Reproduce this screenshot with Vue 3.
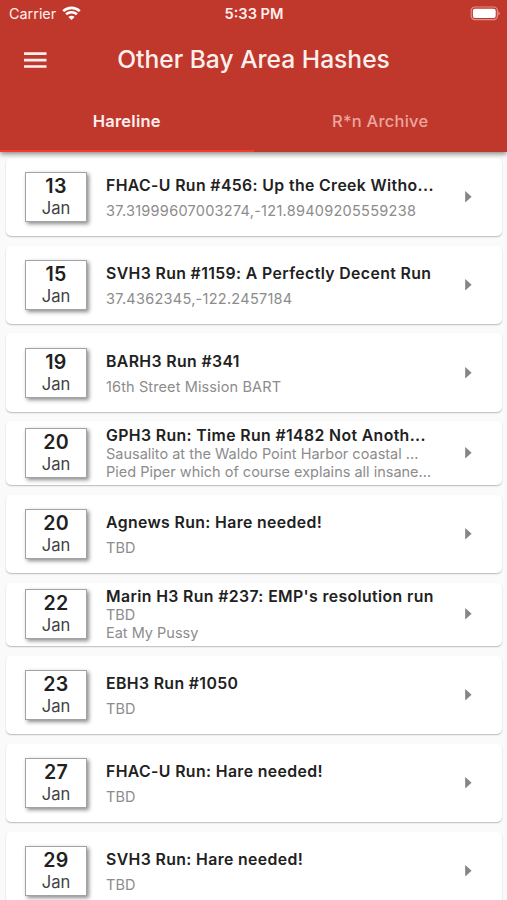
<script setup>
const runs = [
  { day: 13, title: 'FHAC-U Run #456: Up the Creek Witho...', lines: ['37.31999607003274,-121.89409205559238'], coords: true },
  { day: 15, title: 'SVH3 Run #1159: A Perfectly Decent Run', lines: ['37.4362345,-122.2457184'], coords: true },
  { day: 19, title: 'BARH3 Run #341', lines: ['16th Street Mission BART'] },
  { day: 20, title: 'GPH3 Run: Time Run #1482 Not Anoth...', lines: ['Sausalito at the Waldo Point Harbor coastal ...', 'Pied Piper which of course explains all insane...'] },
  { day: 20, title: 'Agnews Run: Hare needed!', lines: ['TBD'] },
  { day: 22, title: "Marin H3 Run #237: EMP's resolution run", lines: ['TBD', 'Eat My Pussy'] },
  { day: 23, title: 'EBH3 Run #1050', lines: ['TBD'] },
  { day: 27, title: 'FHAC-U Run: Hare needed!', lines: ['TBD'] },
  { day: 29, title: 'SVH3 Run: Hare needed!', lines: ['TBD'] },
]
</script>

<template>
  <div class="screen">
    <header class="header">
      <div class="status">
        <div class="carrier">
          <span>Carrier</span>
          <svg class="wifi" width="19" height="15" viewBox="0 0 19 15">
            <path d="M1.2 5.1C6 .8 13 .8 17.8 5.1" />
            <path d="M4.1 8.3c3-2.8 7.8-2.8 10.8 0" />
            <path class="dot" d="M6.4 10.9c1.8-1.6 4.4-1.6 6.2 0L9.5 14z" />
          </svg>
        </div>
        <span class="clock">5:33 PM</span>
        <svg class="battery" width="31" height="15" viewBox="0 0 31 15">
          <rect class="shell" x="1.2" y="1" width="26.2" height="12.6" rx="3.6" />
          <rect class="charge" x="2.9" y="2.7" width="22.8" height="9.2" rx="2" />
          <path class="cap" d="M28.4 5.2c1.8.8 1.8 3.6 0 4.4z" />
        </svg>
      </div>
      <div class="toolbar">
        <svg class="menu" width="23" height="16" viewBox="0 0 23 16">
          <path d="M0 1.6h22.5M0 8.1h22.5M0 14.5h22.5" />
        </svg>
        <h1 class="heading">Other Bay Area Hashes</h1>
      </div>
      <nav class="tabs">
        <div class="tab active"><span>Hareline</span></div>
        <div class="tab"><span>R*n Archive</span></div>
      </nav>
    </header>
    <main class="list">
      <article
        v-for="(run, i) in runs"
        :key="i"
        class="card"
        :class="{ dense: run.lines.length > 1, coords: run.coords }"
      >
        <div class="date">
          <span class="day">{{ run.day }}</span>
          <span class="month">Jan</span>
        </div>
        <div class="info">
          <div class="title">{{ run.title }}</div>
          <div v-for="line in run.lines" :key="line" class="line">{{ line }}</div>
        </div>
        <svg class="arrow" width="7" height="12" viewBox="0 0 7 12"><path d="M.2 0 6.6 5.7 .2 11.4z" /></svg>
      </article>
    </main>
  </div>
</template>

<style>
body {
  background: #fafafa;
  overflow: hidden;
}
</style>

<style scoped>
.screen {
  width: 507px;
  height: 900px;
  overflow: hidden;
  display: flex;
  flex-direction: column;
  background: #fafafa;
  font-family: Inter, 'Liberation Sans', sans-serif;
  color: #212121;
}
.header {
  flex: none;
  height: 152.4px;
  display: flex;
  flex-direction: column;
  background: #c0372c;
  color: #fff0ee;
  box-shadow: 0 2px 5px rgba(0, 0, 0, 0.46);
  z-index: 1;
}
.status {
  height: 27px;
  display: grid;
  grid-template-columns: 1fr auto 1fr;
  align-items: center;
  padding: 0 6px 0 9px;
  font-size: 14.4px;
}
.carrier {
  display: flex;
  align-items: center;
  gap: 6px;
}
.wifi {
  margin-top: -1px;
  fill: none;
  stroke: #fff;
  stroke-width: 2.6;
}
.wifi .dot {
  fill: #fff;
  stroke: none;
}
.clock {
  margin-right: 2px;
  font-weight: 600;
  font-size: 14.6px;
}
.battery {
  justify-self: end;
  margin-top: -1px;
}
.shell {
  fill: none;
  stroke: #e08f88;
  stroke-width: 1.2;
}
.charge {
  fill: #fff;
}
.cap {
  fill: #e08f88;
}
.toolbar {
  height: 65px;
  display: grid;
  grid-template-columns: 93px 1fr 93px;
  align-items: center;
}
.menu {
  margin-left: 24px;
  stroke: #fff0ee;
  stroke-width: 2.6;
}
.heading {
  margin: 0;
  padding-bottom: 1px;
  text-align: center;
  font-size: 24.6px;
  font-weight: 500;
  white-space: nowrap;
}
.tabs {
  flex: 1;
  display: flex;
}
.tab {
  flex: 1;
  display: flex;
  align-items: center;
  justify-content: center;
  border-bottom: 2px solid transparent;
  font-size: 16.5px;
  font-weight: 500;
  letter-spacing: 0.22px;
  color: #eba69e;
}
.tab span {
  padding-bottom: 1px;
}
.tab.active {
  color: #fff0ee;
  font-weight: 600;
  border-color: #f23a2f;
}
.list {
  display: flex;
  flex-direction: column;
  gap: 9.8px;
  padding: 5.3px 5px 0 6px;
}
.card {
  flex: none;
  height: 78.1px;
  display: flex;
  align-items: center;
  padding: 0 30px 0 19px;
  box-sizing: border-box;
  border-radius: 5px;
  background: #fff;
  box-shadow: 0 1px 1.5px rgba(0, 0, 0, 0.26);
}
.card.dense {
  height: 63.5px;
}
.date {
  flex: none;
  width: 62px;
  height: 50px;
  box-sizing: border-box;
  display: flex;
  flex-direction: column;
  align-items: center;
  border: 1px solid #a3a3a3;
  background: #fff;
  box-shadow: 2px 2px 4px rgba(0, 0, 0, 0.45);
}
.day {
  font-size: 19.6px;
  line-height: 22px;
  margin-top: 2px;
  font-weight: 600;
  letter-spacing: 0.3px;
}
.month {
  font-size: 16.6px;
  line-height: 22px;
  color: #424242;
}
.info {
  flex: 1;
  min-width: 0;
  margin-left: 19px;
  padding-top: 2px;
  white-space: nowrap;
}
.title {
  font-size: 15.8px;
  line-height: 20px;
  font-weight: 600;
  letter-spacing: 0.38px;
}
.line {
  margin-top: 6px;
  font-size: 14.5px;
  line-height: 18px;
  letter-spacing: 0.12px;
  color: #8c8c8c;
}
.coords .line {
  letter-spacing: 0.27px;
}
.dense .info {
  padding-top: 0;
}
.dense .title {
  line-height: 19px;
}
.dense .line {
  margin-top: 0;
  line-height: 17.5px;
  letter-spacing: 0;
}
.arrow {
  flex: none;
  fill: #858585;
}
</style>
